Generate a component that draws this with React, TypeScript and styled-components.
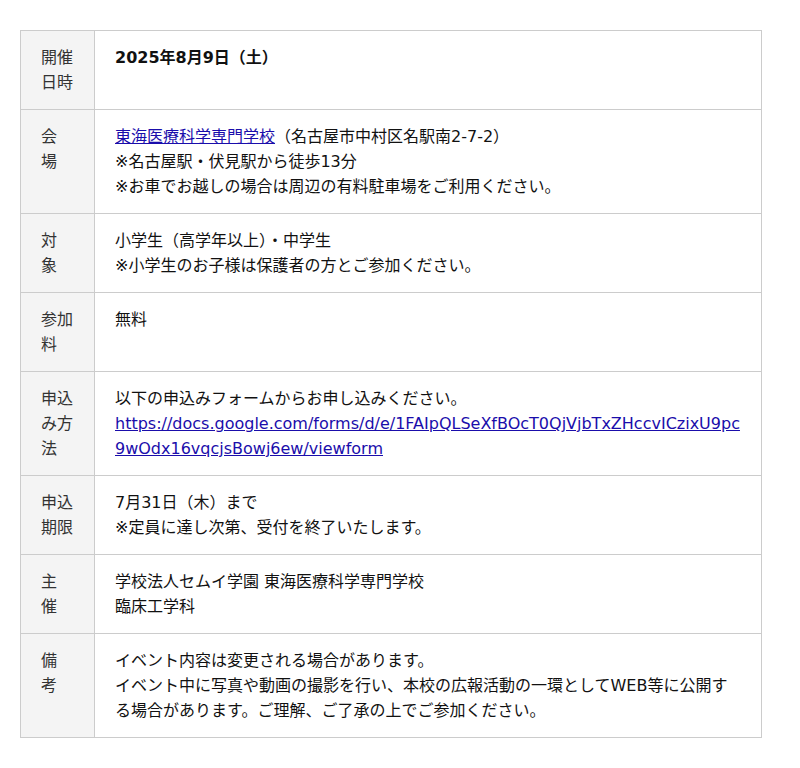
import { FC } from "react";
import styled, { createGlobalStyle } from "styled-components";

const GlobalStyle = createGlobalStyle`
  body {
    margin: 0;
    background: #fff;
    font-family: "DejaVu Sans", "Noto Sans CJK JP", sans-serif;
    color: #111;
  }
`;

const Page = styled.div`
  padding: 30px 38px 30px 20px;
`;

const InfoTable = styled.table`
  width: 742px;
  border-collapse: collapse;
  font-size: 16px;
  line-height: 25px;
`;

const Row = styled.tr`
  border: 1px solid #ccc;
`;

const Head = styled.th`
  width: 33px;
  padding: 14px 20px;
  background: #f4f4f4;
  border-right: 1px solid #ccc;
  color: #333;
  font-weight: normal;
  text-align: left;
  vertical-align: top;
`;

const Cell = styled.td`
  padding: 14px 20px;
  vertical-align: top;
  word-break: break-all;
`;

const Strong = styled.strong`
  font-weight: bold;
`;

const Link = styled.a`
  color: #1a0dab;
  text-decoration: underline;
`;

const Line = styled.div``;

const FORM_URL =
  "https://docs.google.com/forms/d/e/1FAIpQLSeXfBOcT0QjVjbTxZHccvICzixU9pc9wOdx16vqcjsBowj6ew/viewform";

const App: FC = () => {
  return (
    <Page>
      <GlobalStyle />
      <InfoTable>
        <tbody>
          <Row>
            <Head>開催日時</Head>
            <Cell>
              <Strong>2025年8月9日（土）</Strong>
            </Cell>
          </Row>
          <Row>
            <Head>会　場</Head>
            <Cell>
              <Line>
                <Link href="#">東海医療科学専門学校</Link>（名古屋市中村区名駅南2-7-2）
              </Line>
              <Line>※名古屋駅・伏見駅から徒歩13分</Line>
              <Line>※お車でお越しの場合は周辺の有料駐車場をご利用ください。</Line>
            </Cell>
          </Row>
          <Row>
            <Head>対　象</Head>
            <Cell>
              <Line>小学生（高学年以上）・中学生</Line>
              <Line>※小学生のお子様は保護者の方とご参加ください。</Line>
            </Cell>
          </Row>
          <Row>
            <Head>参加料</Head>
            <Cell>無料</Cell>
          </Row>
          <Row>
            <Head>申込み方法</Head>
            <Cell>
              <Line>以下の申込みフォームからお申し込みください。</Line>
              <Link href="#">{FORM_URL}</Link>
            </Cell>
          </Row>
          <Row>
            <Head>申込期限</Head>
            <Cell>
              <Line>7月31日（木）まで</Line>
              <Line>※定員に達し次第、受付を終了いたします。</Line>
            </Cell>
          </Row>
          <Row>
            <Head>主　催</Head>
            <Cell>
              <Line>学校法人セムイ学園 東海医療科学専門学校</Line>
              <Line>臨床工学科</Line>
            </Cell>
          </Row>
          <Row>
            <Head>備　考</Head>
            <Cell>
              <Line>イベント内容は変更される場合があります。</Line>
              <Line>
                イベント中に写真や動画の撮影を行い、本校の広報活動の一環としてWEB等に公開する場合があります。ご理解、ご了承の上でご参加ください。
              </Line>
            </Cell>
          </Row>
        </tbody>
      </InfoTable>
    </Page>
  );
};

export default App;
